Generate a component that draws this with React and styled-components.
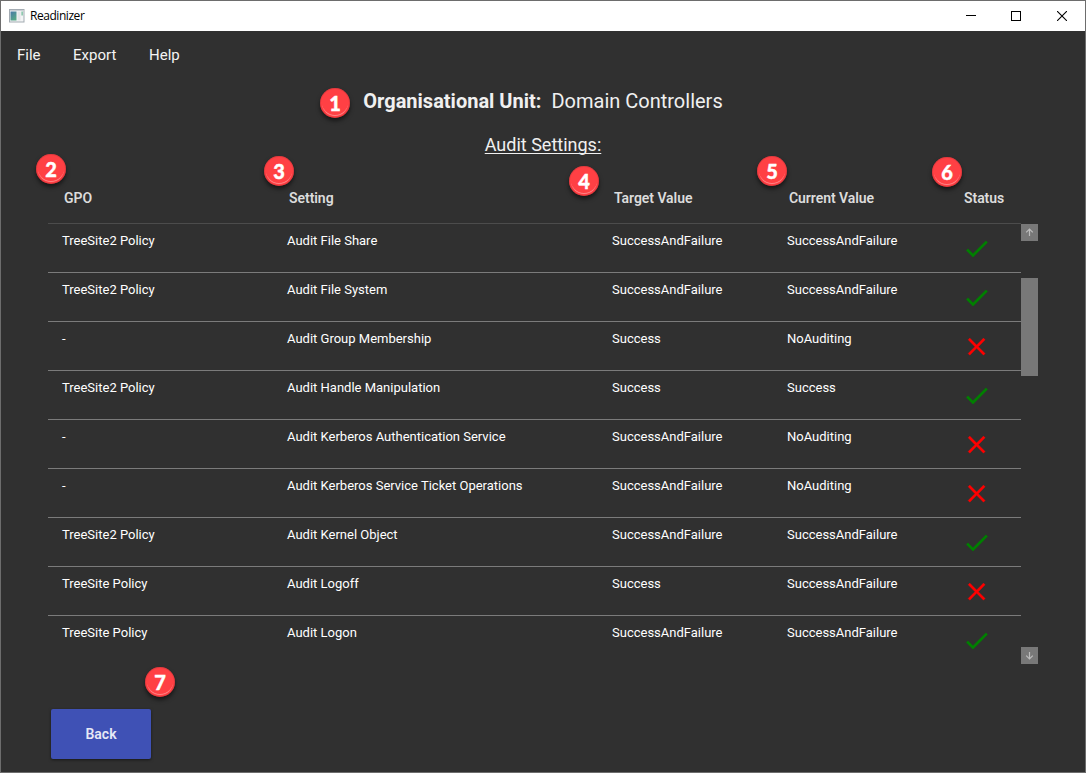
import React from 'react';
import styled, { createGlobalStyle } from 'styled-components';

const GlobalStyle = createGlobalStyle`
  *, *::before, *::after { box-sizing: border-box; }
  body { margin: 0; background: #303030; overflow: hidden; }
  button { font: inherit; border: 0; padding: 0; margin: 0; }
`;

const Window = styled.div`
  position: relative;
  display: flex;
  flex-direction: column;
  width: 1086px;
  height: 773px;
  border: 1px solid #6d6d6d;
  background: #303030;
  color: #fff;
  font-family: Roboto, sans-serif;
`;

const TitleBar = styled.header`
  display: flex;
  align-items: center;
  height: 30px;
  flex: none;
  padding-left: 8px;
  background: #fff;
  color: #000;
`;

const AppIcon = styled.svg`
  width: 16px;
  height: 16px;
  margin-top: -1px;
`;

const AppTitle = styled.span`
  flex: 1;
  margin-left: 5px;
  font: 12px/16px 'Open Sans', sans-serif;
  letter-spacing: -0.45px;
`;

const Caption = styled.button`
  display: flex;
  align-items: center;
  justify-content: center;
  width: 46px;
  height: 30px;
  background: transparent;
  padding-left: ${(p) => p.$shift || 0}px;
`;

const MenuBar = styled.nav`
  display: flex;
  flex: none;
  gap: 32px;
  height: 48px;
  padding-left: 16px;
  align-items: center;
  font-size: 15px;
  line-height: 20px;
  color: #f4f4f4;
`;

const MenuItem = styled.span`
  width: ${(p) => p.$width}px;
  white-space: nowrap;
`;

const Heading = styled.h1`
  display: flex;
  justify-content: center;
  gap: 10px;
  margin: 10px 0 0;
  flex: none;
  font-size: 20px;
  line-height: 24px;
  font-weight: 400;
  color: #f0f0f0;
  b { font-weight: 700; }
`;

const SubHeading = styled.h2`
  margin: 20px 0 0;
  flex: none;
  text-align: center;
  font-size: 18px;
  line-height: 24px;
  font-weight: 400;
  color: #f0f0f0;
  text-decoration: underline;
  text-decoration-thickness: 1px;
  text-underline-offset: 2px;
  text-decoration-skip-ink: none;
`;

const Table = styled.section`
  width: 990px;
  margin: 18px 0 0 47px;
  flex: none;
`;

const columns = '225px 325px 175px 175px 73px';

const HeaderRow = styled.div`
  display: grid;
  grid-template-columns: ${columns};
  width: 973px;
  height: 49px;
  padding-top: 13px;
  border-bottom: 1px solid #4c4c4c;
  font-size: 14px;
  line-height: 20px;
  font-weight: 600;
  letter-spacing: -0.05px;
  color: #dcdcdc;
`;

const HeaderCell = styled.span`
  padding-left: 16px;
`;

const Body = styled.div`
  display: flex;
  height: 440px;
`;

const Rows = styled.div`
  width: 973px;
`;

const Row = styled.div`
  display: grid;
  grid-template-columns: ${columns};
  height: 49px;
  border-bottom: 1px solid #7b7b7b;
  font-size: 13px;
  line-height: 16px;
`;

const LastRow = styled(Row)`
  border-bottom-color: transparent;
`;

const Cell = styled.span`
  padding: 9px 0 0 14px;
  white-space: nowrap;
`;

const StatusCell = styled.span`
  display: flex;
  align-items: center;
  padding: 1px 0 0 14px;
`;

const ScrollBar = styled.div`
  display: flex;
  flex-direction: column;
  width: 17px;
`;

const ScrollButton = styled.button`
  display: flex;
  align-items: center;
  justify-content: center;
  width: 17px;
  height: 17px;
  background: #787878;
`;

const Track = styled.div`
  flex: 1;
  padding-top: 37px;
`;

const Thumb = styled.div`
  height: 98px;
  background: #787878;
`;

const BackButton = styled.button`
  flex: none;
  width: 100px;
  height: 50px;
  margin: 45px 0 0 50px;
  border-radius: 2px;
  background: #3f51b5;
  box-shadow: 0 1px 3px rgba(0, 0, 0, 0.5);
  color: #e6e8f5;
  font-size: 14px;
  font-weight: 600;
`;

const Badge = styled.span`
  position: absolute;
  left: ${(p) => p.$x - 16}px;
  top: ${(p) => p.$y - 16}px;
  width: 30px;
  height: 30px;
  border-radius: 50%;
  background: #ff4044;
  box-shadow: 0 3px 4px rgba(0, 0, 0, 0.55), inset 0 0 0 1px rgba(190, 50, 55, 0.4);
  color: #fff;
  text-align: center;
  font: 900 20px/30px Lato, sans-serif;
  -webkit-text-stroke: 0.4px #fff;
  &::after {
    content: '';
    position: absolute;
    inset: 2px;
    border-radius: 50%;
    box-shadow: inset 0 -1.5px 0 -0.5px #ff8486;
  }
`;

const data = [
  ['TreeSite2 Policy', 'Audit File Share', 'SuccessAndFailure', 'SuccessAndFailure', true],
  ['TreeSite2 Policy', 'Audit File System', 'SuccessAndFailure', 'SuccessAndFailure', true],
  ['-', 'Audit Group Membership', 'Success', 'NoAuditing', false],
  ['TreeSite2 Policy', 'Audit Handle Manipulation', 'Success', 'Success', true],
  ['-', 'Audit Kerberos Authentication Service', 'SuccessAndFailure', 'NoAuditing', false],
  ['-', 'Audit Kerberos Service Ticket Operations', 'SuccessAndFailure', 'NoAuditing', false],
  ['TreeSite2 Policy', 'Audit Kernel Object', 'SuccessAndFailure', 'SuccessAndFailure', true],
  ['TreeSite Policy', 'Audit Logoff', 'Success', 'SuccessAndFailure', false],
  ['TreeSite Policy', 'Audit Logon', 'SuccessAndFailure', 'SuccessAndFailure', true],
];

const badges = [
  [335, 103],
  [51, 169],
  [279, 171],
  [584, 181],
  [772, 171],
  [947, 172],
  [160, 682],
];

const StatusIcon = ({ ok }) => (
  <svg width="29.3" height="29.3" viewBox="0 0 24 24" fill={ok ? '#008000' : '#ff0000'}>
    <path
      d={
        ok
          ? 'M21 7L9 19 3.5 13.5 4.91 12.09 9 16.17 19.59 5.59z'
          : 'M19 6.41L17.59 5 12 10.59 6.41 5 5 6.41 10.59 12 5 17.59 6.41 19 12 13.41 17.59 19 19 17.59 13.41 12z'
      }
      stroke={ok ? '#008000' : '#ff0000'}
      strokeWidth="0.25"
    />
  </svg>
);

const Arrow = ({ down }) => (
  <svg width="9" height="9" viewBox="0 0 9 9" fill="none" stroke="#bcbcbc" strokeWidth="1.2">
    <path d={down ? 'M4.5 1v7M1.2 4.7l3.3 3.3 3.3-3.3' : 'M4.5 8V1M1.2 4.3L4.5 1l3.3 3.3'} />
  </svg>
);

export default function App() {
  return (
    <>
      <GlobalStyle />
      <Window>
        <TitleBar>
          <AppIcon viewBox="0 0 16 16">
            <defs>
              <linearGradient id="pane" x1="0" y1="0" x2="0.6" y2="1">
                <stop offset="0" stopColor="#4778a8" />
                <stop offset="1" stopColor="#57a886" />
              </linearGradient>
            </defs>
            <rect x="0.5" y="1.5" width="14.5" height="12.5" fill="#f4f5f6" stroke="#a3abb2" />
            <path d="M1 2.5h13.5" stroke="#cbd0d5" />
            <rect x="1.5" y="3.5" width="6" height="9" fill="url(#pane)" />
            <rect x="8.5" y="3.5" width="3" height="9" fill="#e3e5e7" />
            <rect x="12.3" y="3.5" width="1.7" height="4" fill="#8fc9b0" />
          </AppIcon>
          <AppTitle>Readinizer</AppTitle>
          <Caption aria-label="Minimize" $shift={2}>
            <svg width="10" height="10" shapeRendering="crispEdges">
              <path d="M0 4.5h10" stroke="#000" />
            </svg>
          </Caption>
          <Caption aria-label="Maximize">
            <svg width="10" height="10" shapeRendering="crispEdges">
              <rect x="0.5" y="0.5" width="9" height="9" fill="none" stroke="#000" />
            </svg>
          </Caption>
          <Caption aria-label="Close">
            <svg width="10" height="10">
              <path d="M0 0l10 10M10 0L0 10" stroke="#000" strokeWidth="1.1" />
            </svg>
          </Caption>
        </TitleBar>
        <MenuBar>
          <MenuItem $width={24}>File</MenuItem>
          <MenuItem $width={44}>Export</MenuItem>
          <MenuItem $width={32}>Help</MenuItem>
        </MenuBar>
        <Heading>
          <b>Organisational Unit:</b>
          <span>Domain Controllers</span>
        </Heading>
        <SubHeading>Audit Settings:</SubHeading>
        <Table>
          <HeaderRow>
            {['GPO', 'Setting', 'Target Value', 'Current Value', 'Status'].map((name) => (
              <HeaderCell key={name}>{name}</HeaderCell>
            ))}
          </HeaderRow>
          <Body>
            <Rows>
              {data.map(([gpo, setting, target, current, ok], i) => {
                const RowKind = i === data.length - 1 ? LastRow : Row;
                return (
                  <RowKind key={setting}>
                    <Cell>{gpo}</Cell>
                    <Cell>{setting}</Cell>
                    <Cell>{target}</Cell>
                    <Cell>{current}</Cell>
                    <StatusCell>
                      <StatusIcon ok={ok} />
                    </StatusCell>
                  </RowKind>
                );
              })}
            </Rows>
            <ScrollBar>
              <ScrollButton aria-label="Scroll up">
                <Arrow />
              </ScrollButton>
              <Track>
                <Thumb />
              </Track>
              <ScrollButton aria-label="Scroll down">
                <Arrow down />
              </ScrollButton>
            </ScrollBar>
          </Body>
        </Table>
        <BackButton>Back</BackButton>
        {badges.map(([x, y], i) => (
          <Badge key={i} $x={x} $y={y}>
            {i + 1}
          </Badge>
        ))}
      </Window>
    </>
  );
}
